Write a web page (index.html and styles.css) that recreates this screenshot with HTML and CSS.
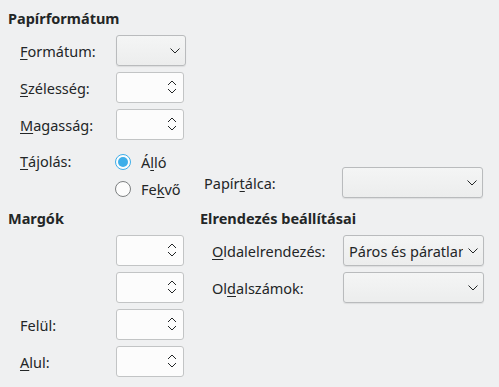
FILE: index.html
```html
<!DOCTYPE html>
<html lang="hu">
<head>
<meta charset="utf-8">
<link rel="stylesheet" href="styles.css">
</head>
<body>
<div class="page">
  <div class="heading">Papírformátum</div>
  <div class="format-grid">
    <div class="label"><u>F</u>ormátum:</div>
    <div class="combo small"><svg class="chev" viewBox="0 0 10 6"><path d="M0.5 0.5 L5 5 L9.5 0.5"/></svg></div>
    <div class="label"><u>S</u>zélesség:</div>
    <div class="spin"><svg class="arrows" viewBox="0 0 10 14"><path d="M1 5 L5 1 L9 5 M1 9 L5 13 L9 9"/></svg></div>
    <div class="label"><u>M</u>agasság:</div>
    <div class="spin"><svg class="arrows" viewBox="0 0 10 14"><path d="M1 5 L5 1 L9 5 M1 9 L5 13 L9 9"/></svg></div>
  </div>
  <div class="orient-row">
    <div class="label orient-label"><u>T</u>ájolás:</div>
    <div class="radios">
      <div class="radio-item"><span class="radio checked"></span><span>Á<u>l</u>ló</span></div>
      <div class="radio-item"><span class="radio"></span><span>Fe<u>k</u>vő</span></div>
    </div>
    <div class="tray">
      <div class="label tray-label">Papír<u>t</u>álca:</div>
      <div class="combo wide"><svg class="chev" viewBox="0 0 10 6"><path d="M0.5 0.5 L5 5 L9.5 0.5"/></svg></div>
    </div>
  </div>
  <div class="bottom">
    <div class="margins">
      <div class="heading">Margók</div>
      <div class="margin-grid">
        <div class="label"></div>
        <div class="spin"><svg class="arrows" viewBox="0 0 10 14"><path d="M1 5 L5 1 L9 5 M1 9 L5 13 L9 9"/></svg></div>
        <div class="label"></div>
        <div class="spin"><svg class="arrows" viewBox="0 0 10 14"><path d="M1 5 L5 1 L9 5 M1 9 L5 13 L9 9"/></svg></div>
        <div class="label">Felül:</div>
        <div class="spin"><svg class="arrows" viewBox="0 0 10 14"><path d="M1 5 L5 1 L9 5 M1 9 L5 13 L9 9"/></svg></div>
        <div class="label"><u>A</u>lul:</div>
        <div class="spin"><svg class="arrows" viewBox="0 0 10 14"><path d="M1 5 L5 1 L9 5 M1 9 L5 13 L9 9"/></svg></div>
      </div>
    </div>
    <div class="layout">
      <div class="heading">Elrendezés beállításai</div>
      <div class="layout-grid">
        <div class="label"><u>O</u>ldalelrendezés:</div>
        <div class="combo wide"><span class="combo-text">Páros és páratlan</span><svg class="chev" viewBox="0 0 10 6"><path d="M0.5 0.5 L5 5 L9.5 0.5"/></svg></div>
        <div class="label">Ol<u>d</u>alszámok:</div>
        <div class="combo wide"><svg class="chev" viewBox="0 0 10 6"><path d="M0.5 0.5 L5 5 L9.5 0.5"/></svg></div>
      </div>
    </div>
  </div>
</div>
</body>
</html>
```
FILE: styles.css
```css
html, body {
  margin: 0;
  padding: 0;
  background: #eff0f1;
}
body {
  font-family: "Noto Sans", sans-serif;
  font-size: 14.5px;
  color: #232627;
  width: 499px;
  height: 387px;
  overflow: hidden;
}
u {
  text-decoration: underline;
  text-underline-offset: 2px;
  text-decoration-thickness: 1px;
}
.page {
  padding: 8px 0 0 8px;
}
.heading {
  font-weight: bold;
  height: 20px;
  line-height: 20px;
}
.format-grid {
  display: grid;
  grid-template-columns: 96px auto;
  grid-auto-rows: 31px;
  row-gap: 6px;
  margin-top: 7px;
  padding-left: 12px;
  justify-items: start;
}
.label {
  display: flex;
  align-items: center;
  white-space: nowrap;
}
.combo {
  position: relative;
  box-sizing: border-box;
  height: 31px;
  border: 1px solid #b9bbbd;
  border-radius: 3px;
  background: linear-gradient(#f4f5f5, #eceded);
  box-shadow: 0 1px 1px rgba(0,0,0,0.08);
  display: flex;
  align-items: center;
  overflow: hidden;
}
.combo.small { width: 70px; }
.combo.wide { width: 141px; }
.chev {
  position: absolute;
  right: 5px;
  top: 12px;
  width: 10px;
  height: 6px;
  fill: none;
  stroke: #232627;
  stroke-width: 1;
}
.combo-text {
  padding-left: 5px;
  white-space: nowrap;
  width: 114px;
  overflow: hidden;
  flex: none;
}
.spin {
  position: relative;
  box-sizing: border-box;
  width: 68px;
  height: 31px;
  border: 1px solid #c2c4c5;
  border-radius: 3px;
  background: #fcfcfc;
}
.arrows {
  position: absolute;
  right: 6px;
  top: 7px;
  width: 10px;
  height: 14px;
  fill: none;
  stroke: #232627;
  stroke-width: 1;
}
.orient-row {
  display: flex;
  margin-top: 6px;
  padding-left: 12px;
}
.orient-label {
  width: 96px;
  height: 30px;
}
.radios {
  display: flex;
  flex-direction: column;
  width: 93px;
  margin-left: -1px;
}
.radio-item {
  display: flex;
  align-items: center;
  gap: 10px;
  height: 27px;
  margin-top: 2px;
}
.radio-item + .radio-item { margin-top: 0; }
.radio {
  box-sizing: border-box;
  width: 16px;
  height: 16px;
  border-radius: 50%;
  border: 1px solid #7d8081;
  background: #fcfcfc;
  position: relative;
}
.radio.checked {
  border-color: #3daee9;
  background: #fcfcfc;
}
.radio.checked::after {
  content: "";
  position: absolute;
  left: 2px;
  top: 2px;
  width: 10px;
  height: 10px;
  border-radius: 50%;
  background: #3daee9;
}
.tray {
  display: flex;
  align-items: flex-start;
  padding-top: 21px;
  margin-left: -4px;
}
.tray-label {
  width: 138px;
  height: 31px;
}
.bottom {
  display: flex;
  margin-top: 6px;
}
.margins {
  width: 192px;
}
.margin-grid {
  display: grid;
  grid-template-columns: 96px auto;
  grid-auto-rows: 31px;
  row-gap: 6px;
  margin-top: 7px;
  padding-left: 12px;
  justify-items: start;
}
.layout-grid {
  display: grid;
  grid-template-columns: 131px auto;
  grid-auto-rows: 31px;
  row-gap: 6px;
  margin-top: 7px;
  padding-left: 12px;
  justify-items: start;
}
```
